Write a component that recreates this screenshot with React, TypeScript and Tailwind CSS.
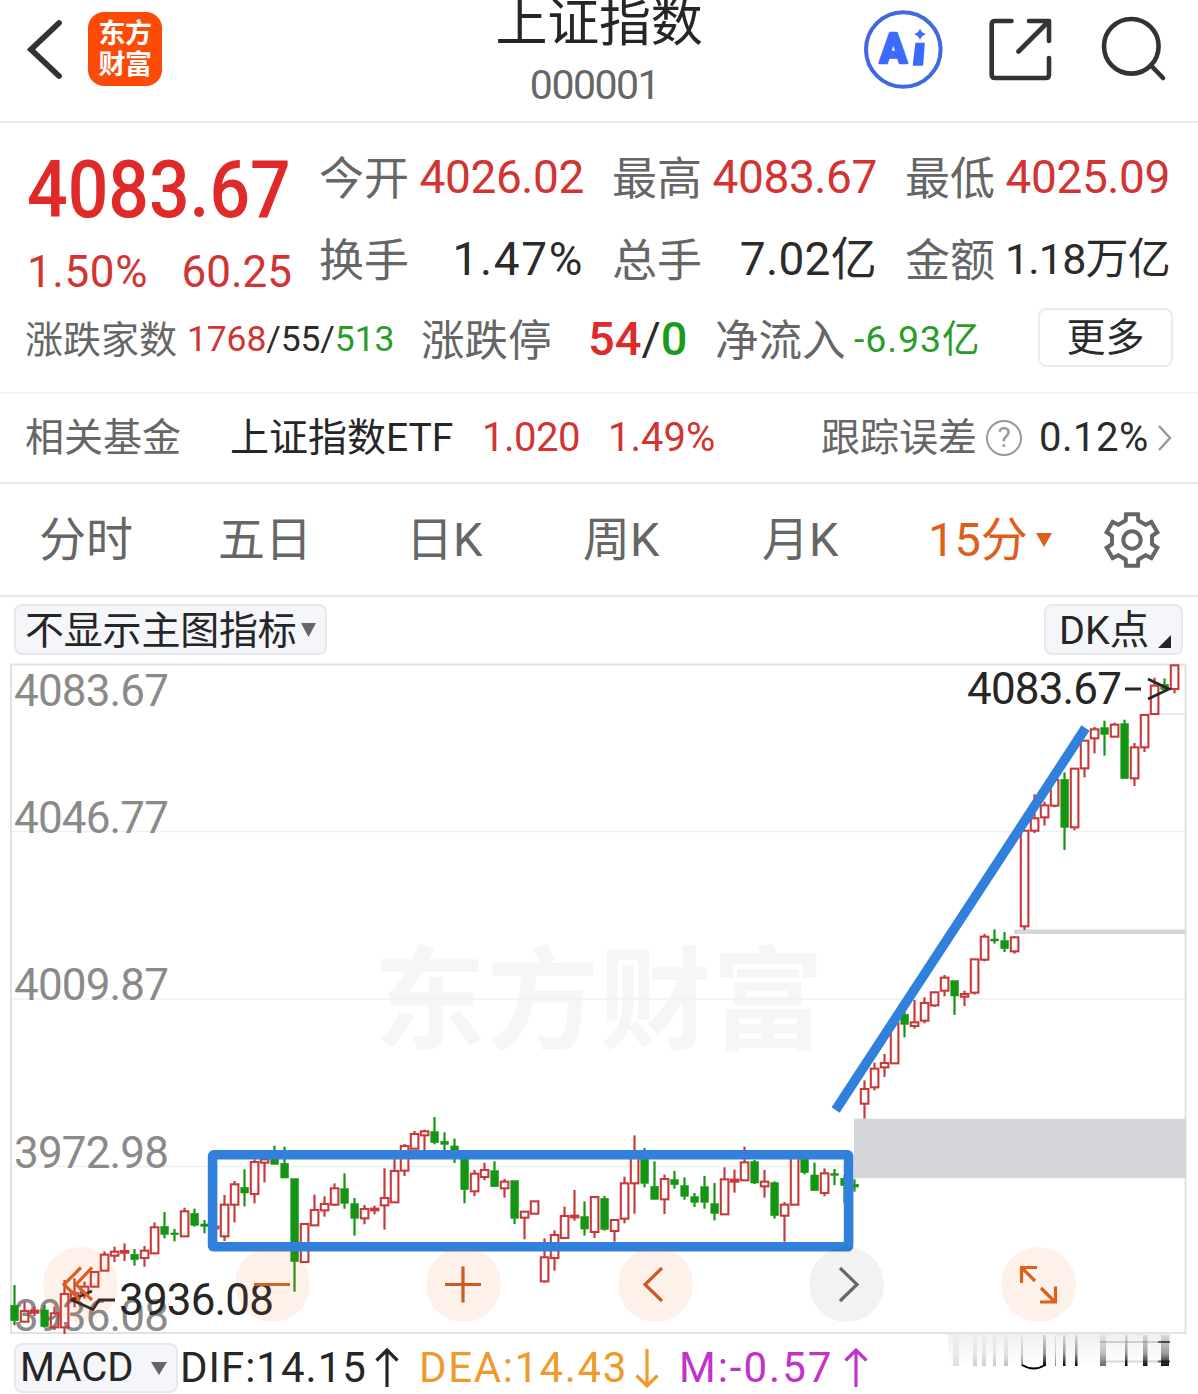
import React from 'react';

// [color, high, open/close top, open/close bottom, low], in thirds of a pixel below `base`
type Candle = [string, number, number, number, number];

const segments: { start: number; base: number; candles: Candle[] }[] = [
  {
    start: 0,
    base: 1100,
    candles: [
      ['g', 555, 616, 662, 676], ['r', 605, 633, 665, 665], ['r', 620, 632, 638, 648], ['g', 615, 630, 680, 683],
      ['r', 620, 640, 682, 690], ['r', 540, 582, 682, 702], ['r', 535, 580, 594, 622], ['r', 545, 560, 580, 596],
      ['r', 513, 516, 560, 560], ['r', 454, 464, 512, 512], ['r', 440, 455, 467, 486], ['r', 430, 453, 458, 483],
      ['g', 447, 463, 479, 497], ['r', 438, 452, 474, 500], ['r', 367, 382, 460, 460], ['g', 336, 379, 403, 415],
      ['g', 387, 399, 404, 424], ['r', 323, 334, 409, 409], ['g', 326, 340, 376, 380], ['g', 360, 372, 379, 400],
      ['r', 375, 380, 385, 390], ['r', 285, 314, 409, 423], ['r', 243, 253, 314, 367], ['g', 208, 262, 279, 319],
      ['r', 178, 186, 282, 310], ['r', 175, 178, 188, 247], ['g', 137, 165, 193, 193], ['g', 140, 190, 234, 234],
      ['g', 236, 236, 485, 575], ['r', 372, 372, 486, 486], ['r', 284, 330, 376, 376], ['r', 289, 312, 331, 350],
      ['r', 250, 265, 314, 317], ['g', 220, 266, 310, 326], ['g', 294, 311, 355, 407], ['r', 315, 327, 355, 373],
      ['r', 317, 326, 331, 343], ['r', 205, 294, 316, 389], ['r', 175, 213, 307, 307], ['r', 132, 138, 212, 228],
      ['r', 93, 102, 146, 146], ['r', 89, 94, 106, 150], ['g', 51, 95, 128, 133], ['g', 97, 124, 133, 150],
      ['g', 116, 138, 160, 189], ['g', 160, 160, 269, 310], ['r', 210, 221, 274, 288], ['r', 188, 210, 231, 241],
      ['g', 184, 212, 260, 260], ['r', 237, 245, 265, 293], ['g', 242, 242, 355, 372], ['r', 335, 335, 353, 418],
      ['r', 304, 304, 341, 341], ['r', 415, 472, 544, 548], ['r', 391, 405, 474, 512], ['r', 320, 348, 414, 414],
      ['r', 270, 347, 352, 362], ['g', 304, 350, 387, 407], ['r', 291, 291, 396, 414], ['g', 288, 295, 388, 392],
      ['r', 360, 360, 393, 425], ['r', 230, 250, 356, 370], ['r', 106, 165, 250, 341], ['g', 144, 165, 250, 262],
      ['g', 184, 259, 298, 298], ['r', 224, 237, 298, 342], ['g', 213, 239, 254, 266], ['g', 232, 257, 289, 299],
      ['g', 279, 290, 307, 321], ['g', 228, 260, 307, 326], ['g', 249, 311, 340, 361], ['r', 202, 238, 343, 343],
      ['r', 209, 239, 245, 278], ['r', 140, 187, 241, 241], ['g', 180, 185, 249, 252], ['r', 210, 245, 259, 293],
      ['g', 244, 248, 347, 356], ['r', 306, 314, 347, 425], ['r', 165, 165, 314, 314], ['g', 165, 165, 218, 223],
      ['g', 188, 225, 272, 272], ['r', 205, 220, 279, 289], ['g', 207, 221, 226, 255], ['g', 225, 235, 257, 310],
      ['g', 238, 253, 261, 275],
    ],
  },
  {
    start: 85,
    base: 880,
    candles: [
      ['r', 601, 627, 671, 716], ['r', 548, 566, 622, 631], ['r', 522, 549, 562, 591], ['r', 430, 430, 550, 550],
      ['g', 395, 403, 433, 472], ['r', 360, 427, 438, 446], ['r', 352, 369, 422, 430], ['r', 335, 337, 376, 381],
      ['r', 285, 293, 332, 349], ['g', 302, 302, 348, 405], ['r', 332, 342, 350, 378], ['r', 236, 238, 338, 344],
      ['r', 162, 170, 239, 244], ['g', 148, 177, 183, 191], ['g', 156, 182, 206, 216], ['r', 168, 172, 214, 221],
    ],
  },
  {
    start: 101,
    base: 655,
    candles: [
      ['r', 525, 527, 814, 825], ['r', 418, 490, 527, 534], ['r', 440, 451, 487, 512], ['r', 370, 375, 452, 457],
      ['g', 352, 373, 517, 585], ['r', 341, 341, 517, 526], ['r', 257, 257, 340, 367], ['r', 216, 223, 250, 295],
      ['g', 197, 218, 238, 302], ['r', 203, 209, 245, 245], ['g', 194, 206, 371, 371], ['r', 264, 277, 370, 393],
      ['r', 180, 180, 277, 291], ['r', 68, 92, 177, 177], ['g', 70, 88, 104, 104], ['r', 31, 31, 102, 115],
    ],
  },
];

const stats = [
  [
    { label: '今开', value: '4026.02', cls: 'text-[#d23333]' },
    { label: '最高', value: '4083.67', cls: 'text-[#d23333]' },
    { label: '最低', value: '4025.09', cls: 'text-[#d23333]' },
  ],
  [
    { label: '换手', value: '1.47%', cls: 'text-[#2b2b2b] tracking-[1.6px]' },
    { label: '总手', value: '7.02亿', cls: 'text-[#2b2b2b] tracking-[0.3px]' },
    { label: '金额', value: '1.18万亿', cls: 'text-[#2b2b2b] text-[43px] tracking-[-0.8px]' },
  ],
];

const tabs = [
  { label: '分时', cls: 'w-[179px]' },
  { label: '五日', cls: 'w-[188px]' },
  { label: '日K', cls: 'w-[177px]' },
  { label: '周K', cls: 'w-[179px]' },
  { label: '月K', cls: 'w-[166px]' },
];

const axis = [
  { label: '4083.67', y: 706 },
  { label: '4046.77', y: 833 },
  { label: '4009.87', y: 1000 },
  { label: '3972.98', y: 1168 },
  { label: '3936.08', y: 1330.5 },
];

// smeared strokes below the chart: x, width, opacity at the bottom
const smears = [
  [953, 6, 0.14], [973, 4, 0.2], [982, 4, 0.2], [993, 3, 0.22], [1004, 4, 0.24], [1021, 2, 0.45], [1043, 3, 1],
  [1055, 1, 0.5], [1063, 2.5, 1], [1075, 2.5, 1], [1100, 6, 0.6], [1125, 2.5, 1], [1143, 4.5, 0.95], [1161, 8, 0.95],
];

const gearPoints = [0, 60, 120, 180, 240, 300]
  .flatMap((a) => [
    [a - 18, 20.5],
    [a - 13, 26.5],
    [a + 13, 26.5],
    [a + 18, 20.5],
  ])
  .map(([deg, r]) => {
    const t = ((deg - 90) * Math.PI) / 180;
    return `${(30 + r * Math.cos(t)).toFixed(2)},${(30 + r * Math.sin(t)).toFixed(2)}`;
  })
  .join(' ');

function Header() {
  return (
    <header className="flex h-[123px] border-b-2 border-[#e9e9e9]">
      <div className="flex w-[400px] pl-[22px] pt-[12px]">
        <svg width="44" height="74" viewBox="22 12 44 74" fill="none" stroke="#333" strokeWidth="5.8" strokeLinecap="round">
          <path d="M59 23 L31 49.5 L59 76" />
        </svg>
        <div className="ml-[22px] flex h-[74px] w-[74px] flex-col items-center rounded-[16px] bg-[#fc4a07] pt-[7px] text-[27px] font-bold leading-[31px] tracking-[-0.5px] text-white">
          <span>东方</span>
          <span>财富</span>
        </div>
      </div>
      <div className="flex w-[398px] flex-col items-center">
        <h1 className="h-[50px] text-[52px] font-normal leading-[47px] tracking-[-0.3px] text-[#262626]">上证指数</h1>
        <span className="mr-[9px] h-[70px] text-[41px] leading-[70px] tracking-[-1.5px] text-[#666]">000001</span>
      </div>
      <svg width="400" height="121" viewBox="798 0 400 121" fill="none" strokeLinecap="round" strokeLinejoin="round">
        <circle cx="903.3" cy="49.5" r="37.3" stroke="#4068e0" strokeWidth="4" />
        <g fill="#3a6bfa">
          <text x="879.5" y="62.5" fontSize="43" fontWeight="900" fontFamily="Roboto" stroke="#3a6bfa" strokeWidth="2.4" textLength="27.5" lengthAdjust="spacingAndGlyphs">A</text>
          <path d="M916 43.5 H924 L922.5 65 H913.5 Z" stroke="#3a6bfa" strokeWidth="1.5" />
          <path d="M920 28.5 Q921.5 33 926 34 Q921.5 35.5 920 40 Q918.5 35.5 914 34 Q918.5 33 920 28.5 Z" />
        </g>
        <g stroke="#333" strokeWidth="4.6">
          <path d="M1011.5 21 H995 Q991.7 21 991.7 24.3 V74.7 Q991.7 78 995 78 H1045.5 Q1049 78 1049 74.7 V58" />
          <path d="M1029 21 H1049 V41 M1048 22 L1018.5 51.5" />
          <circle cx="1131.3" cy="46.3" r="27.3" />
          <path d="M1151 65.5 L1163 78" />
        </g>
      </svg>
    </header>
  );
}

function Quote() {
  return (
    <section className="h-[271px] border-b-2 border-[#f3f3f3] pt-[12px]">
      <div className="flex">
        <div className="w-[319px] shrink-0 pl-[27px] text-[#e02a2a]">
          <div className="h-[110px] w-[320px] origin-left scale-x-[0.905] text-[79px] font-medium leading-[110px]">4083.67</div>
          <div className="flex h-[54px] w-[265px] justify-between whitespace-nowrap text-[44px] leading-[54px] text-[#d23333]">
            <span className="tracking-[0.6px]">1.50%</span>
            <span>60.25</span>
          </div>
        </div>
        <div>
          {stats.map((row, idx) => (
            <div key={idx} className="flex h-[82px] gap-7">
              {row.map((item) => (
                <div key={item.label} className="flex w-[265px] justify-between whitespace-nowrap text-[46px] leading-[84px] tracking-[-0.4px]">
                  <span className="text-[45px] leading-[89px] tracking-normal text-[#666]">{item.label}</span>
                  <span className={item.cls}>{item.value}</span>
                </div>
              ))}
            </div>
          ))}
        </div>
      </div>
      <div className="flex h-[78px] whitespace-nowrap pl-[25px] pr-[25px] leading-[80px]">
        <span className="w-[162px] text-[38px] leading-[83px] text-[#666]">涨跌家数</span>
        <span className="w-[234px] text-[35.5px] tracking-[-0.15px] text-[#2b2b2b]">
          <span className="text-[#d23333]">1768</span>/55/<span className="text-[#2a9c2a]">513</span>
        </span>
        <span className="w-[167px] text-[43.5px] leading-[86px] text-[#666]">涨跌停</span>
        <span className="w-[127px] text-[47px] text-[#2b2b2b]">
          <span className="font-medium text-[#dd2a2a]">54</span>/<span className="font-medium text-[#1c9a1c]">0</span>
        </span>
        <span className="w-[139px] text-[43.5px] leading-[86px] text-[#666]">净流入</span>
        <span className="text-[37.5px] tracking-[0.9px] text-[#2a9c2a]">-6.93亿</span>
        <button className="ml-auto mt-[9px] h-[59px] w-[135px] rounded-[8px] border-2 border-[#ececec] text-[39px] leading-[54px] text-[#2b2b2b]">更多</button>
      </div>
    </section>
  );
}

function FundRow() {
  return (
    <section className="flex h-[90px] items-center whitespace-nowrap border-b-2 border-[#e9e9e9] pl-[25px] text-[39px] leading-[88px]">
      <span className="w-[205px] text-[#666]">相关基金</span>
      <span className="w-[252px] text-[#262626]">上证指数ETF</span>
      <span className="w-[126px] text-[40px] tracking-[-0.5px] text-[#d23333]">1.020</span>
      <span className="w-[213px] text-[40px] text-[#d23333]">1.49%</span>
      <span className="w-[165px] text-[#666]">跟踪误差</span>
      <span className="mr-[17px] flex h-[36px] w-[36px] items-center justify-center rounded-full border-[2.5px] border-[#999] text-[28px] leading-none text-[#999]">?</span>
      <span className="w-[110px] text-[40px] tracking-[0.5px] text-[#2b2b2b]">0.12%</span>
      <svg className="ml-[8px]" width="16" height="30" viewBox="0 0 16 30" fill="none" stroke="#999" strokeWidth="2.5">
        <path d="M2 3 L13 15 L2 27" />
      </svg>
    </section>
  );
}

function Tabs() {
  return (
    <nav className="flex h-[113px] items-center whitespace-nowrap border-b-2 border-[#e9e9e9] pl-[39px] text-[47px] leading-[113px] text-[#666]">
      {tabs.map((tab) => (
        <span key={tab.label} className={tab.cls}>{tab.label}</span>
      ))}
      <span className="flex w-[174px] items-center text-[#dd5f1c]">
        15分
        <svg className="ml-[8px]" width="16" height="14" viewBox="0 0 16 14">
          <path d="M0 0 H16 L8 14 Z" fill="#dd5f1c" />
        </svg>
      </span>
      <svg width="60" height="60" viewBox="0 0 60 60" fill="none" stroke="#666" strokeWidth="4">
        <polygon points={gearPoints} />
        <circle cx="30" cy="30" r="8.7" />
      </svg>
    </nav>
  );
}

function IndicatorBar() {
  return (
    <div className="flex h-[59px] items-start justify-between pl-[14px] pr-[15px] pt-[7px] whitespace-nowrap text-[#262626]">
      <div className="flex h-[51px] w-[313px] items-center rounded-[8px] border-2 border-[#e6e8ec] bg-[#f4f6f9] pl-[9px] text-[39px] leading-[47px] tracking-[-0.2px]">
        <span className="pt-[3px]">不显示主图指标</span>
        <svg className="ml-[4px]" width="15" height="14" viewBox="0 0 15 14">
          <path d="M0 0 H15 L7.5 14 Z" fill="#666" />
        </svg>
      </div>
      <div className="flex h-[51px] w-[139px] rounded-[8px] border-2 border-[#e6e8ec] bg-[#f4f6f9] pl-[13px] text-[39.5px] leading-[49px]">
        DK点
        <svg className="ml-[9px] mt-[29px]" width="13" height="13" viewBox="0 0 13 13">
          <path d="M13 0 V13 H0 Z" fill="#262626" />
        </svg>
      </div>
    </div>
  );
}

function CandleShape({ candle, x, base }: { candle: Candle; x: number; base: number }) {
  const [color, high, top, bottom, low] = candle;
  const y = (v: number) => base + v / 3;
  const up = color === 'r';
  const stroke = up ? '#c8393c' : '#149614';
  return (
    <g stroke={stroke} strokeWidth="2.2">
      <line x1={x} x2={x} y1={y(high)} y2={y(top)} />
      <line x1={x} x2={x} y1={y(bottom)} y2={y(low)} />
      <rect
        x={x - 3.7}
        y={y(top)}
        width="7.6"
        height={Math.max(y(bottom) - y(top), 0.6)}
        fill={up ? 'none' : '#149614'}
        strokeWidth={up ? 2.1 : 0.6}
      />
    </g>
  );
}

const controlIcons = [
  { bg: 'bg-[#f06414]/9', d: 'M38 20.5 L21 37.5 L37 53 M49 20.5 L33 37.5 L49 53', color: '#dd5f1c' },
  { bg: 'bg-[#f06414]/9', d: 'M19 37.5 H55', color: '#cc6430' },
  { bg: 'bg-[#f06414]/9', d: 'M19 37.5 H55 M37 19.5 V55.5', color: '#cc5a24' },
  { bg: 'bg-[#f06414]/9', d: 'M44 21 L27 37.5 L44 54', color: '#cc5a24' },
  { bg: 'bg-black/5', d: 'M31 21 L48 37.5 L31 54', color: '#666' },
  { bg: 'bg-[#f06414]/9', d: 'M34 34 L20.5 20.5 M20.5 36 V20.5 H36 M40 41 L54 55 M39 55 H54.5 V39.5', color: '#dd5f1c' },
];

function Chart() {
  return (
    <section className="relative h-[679px]">
      <svg width="1198" height="679" viewBox="0 656 1198 679" fontFamily="Roboto, 'Noto Sans CJK SC', sans-serif" className="block">
        <text x="374" y="1041" fontSize="112" fontWeight="700" fill="#f6f6f6" textLength="450">东方财富</text>
        <g stroke="#f0f0f0" strokeWidth="1.5">
          <line x1="11" x2="1185" y1="831.5" y2="831.5" />
          <line x1="11" x2="1185" y1="999" y2="999" />
          <line x1="11" x2="1185" y1="1166.5" y2="1166.5" />
          <line x1="1146" x2="1185" y1="714" y2="714" stroke="#e2e2e5" />
        </g>
        <rect x="11" y="664.5" width="1174.5" height="668.5" fill="none" stroke="#e2e2e2" strokeWidth="2" />
        <rect x="1014" y="929.5" width="171.5" height="4.5" fill="#d5d6da" />
        <rect x="854" y="1118.7" width="332" height="59.5" fill="#d5d6da" />
        <g fontSize="44" fill="#8a8a8a">
          {axis.map((row) => (
            <text key={row.label} x="14" y={row.y} textLength="155">{row.label}</text>
          ))}
        </g>
        {segments.map((seg) =>
          seg.candles.map((candle, idx) => (
            <CandleShape key={seg.start + idx} candle={candle} x={14.5 + (seg.start + idx) * 10} base={seg.base} />
          ))
        )}
        <g fontSize="44" fill="#262626">
          <text x="967" y="703.5" textLength="155">4083.67</text>
          <text x="119" y="1314.5" textLength="155">3936.08</text>
        </g>
        <g fill="none" stroke="#262626" strokeWidth="2.8">
          <path d="M1125 689 H1141 M1148 679 L1169 689 L1148 699" />
          <path d="M98 1300 H115 M92 1291 L72 1300 L93 1309.5 L99 1300" />
        </g>
        <rect x="212.6" y="1154.8" width="636" height="92" rx="1" fill="none" stroke="#3080dc" strokeWidth="9.6" strokeLinejoin="round" />
        <line x1="835.6" y1="1110" x2="1085.5" y2="728" stroke="#3080dc" strokeWidth="9.6" />
      </svg>
      <div className="absolute left-[43px] top-[591px] flex w-[1033px] justify-between">
        {controlIcons.map((icon) => (
          <button key={icon.d} className={`h-[75px] w-[75px] rounded-full ${icon.bg}`}>
            <svg width="75" height="75" viewBox="0 0 75 75" fill="none" stroke={icon.color} strokeWidth="3.2">
              <path d={icon.d} />
            </svg>
          </button>
        ))}
      </div>
    </section>
  );
}

function Arrow({ color, down = false }: { color: string; down?: boolean }) {
  return (
    <svg width="26" height="42" viewBox="0 0 26 42" fill="none" stroke={color} strokeWidth="3.2" className={down ? 'rotate-180' : ''}>
      <path d="M13 3 V40 M2.5 13.5 L13 3 L23.5 13.5" />
    </svg>
  );
}

function MacdBar() {
  return (
    <footer className="flex h-[59px] items-start whitespace-nowrap pl-[14px] text-[42px] leading-[50px]">
      <div className="mt-[8px] flex h-[50px] w-[164px] items-center rounded-[8px] border-2 border-[#e6e8ec] bg-[#f4f6f9] pl-[4px] text-[40px] text-[#262626]">
        MACD
        <svg className="ml-[18px]" width="16" height="13" viewBox="0 0 16 13">
          <path d="M0 0 H16 L8 13 Z" fill="#666" />
        </svg>
      </div>
      <div className="mt-[8px] flex h-[50px] w-[241px] items-center pl-[2px] text-[#262626]">
        <span className="w-[194px] tracking-[1px]">DIF:14.15</span>
        <Arrow color="#262626" />
      </div>
      <div className="mt-[8px] flex h-[50px] w-[260px] items-center text-[#ee9a2c]">
        <span className="w-[215px] tracking-[1.6px]">DEA:14.43</span>
        <Arrow color="#ee9a2c" down />
      </div>
      <div className="mt-[8px] flex h-[50px] items-center text-[#c132c9]">
        <span className="w-[164px] tracking-[2px]">M:-0.57</span>
        <Arrow color="#c132c9" />
      </div>
      <svg className="-mt-[2px] ml-auto" width="251" height="40" viewBox="947 1333 251 40">
        <defs>
          <linearGradient id="smear" x1="0" y1="0" x2="0" y2="1">
            <stop offset="0" stopColor="#000" stopOpacity="0.1" />
            <stop offset="0.6" stopColor="#000" stopOpacity="0.4" />
            <stop offset="1" stopColor="#000" />
          </linearGradient>
          <linearGradient id="haze" x1="0" y1="0" x2="0" y2="1">
            <stop offset="0" stopColor="#000" stopOpacity="0.06" />
            <stop offset="1" stopColor="#000" stopOpacity="0" />
          </linearGradient>
        </defs>
        <rect x="948" y="1334" width="223" height="32" fill="url(#haze)" />
        {smears.map(([x, w, o]) => (
          <rect key={x} x={x} y="1335" width={w} height="31" fill="url(#smear)" opacity={o} />
        ))}
        <path d="M1022 1365 Q1034 1372 1045 1365" fill="none" stroke="#000" strokeWidth="2" />
        <path d="M1100 1342 H1170 M1105 1361.5 H1170" stroke="#000" strokeOpacity="0.15" strokeWidth="2" />
        <path d="M1158 1342 H1170 M1158 1361.5 H1170" stroke="#000" strokeOpacity="0.55" strokeWidth="2" />
      </svg>
    </footer>
  );
}

export default function App() {
  return (
    <main className="h-[1394px] w-[1198px] overflow-hidden bg-white font-[Roboto,'Noto_Sans_CJK_SC',sans-serif]">
      <Header />
      <Quote />
      <FundRow />
      <Tabs />
      <IndicatorBar />
      <Chart />
      <MacdBar />
    </main>
  );
}
